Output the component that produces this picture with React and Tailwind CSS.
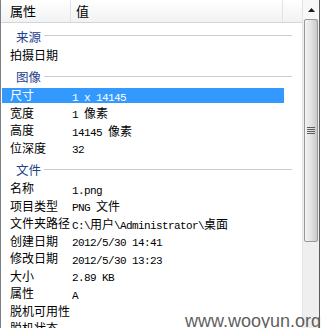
import React from "react";

const CJK = /[\u3000-\u9fff\uff00-\uffef]/;

function Val({ text }) {
  const parts = [];
  let cur = "";
  let curCjk = null;
  for (const ch of text) {
    const c = CJK.test(ch);
    if (curCjk === null || c === curCjk) {
      cur += ch;
    } else {
      parts.push([cur, curCjk]);
      cur = ch;
    }
    curCjk = c;
  }
  if (cur) parts.push([cur, curCjk]);
  return (
    <span className="whitespace-pre">
      {parts.map(([t, c], i) =>
        c ? (
          <span key={i} className="font-['Noto_Sans_CJK_SC',sans-serif] text-[12px]">
            {t}
          </span>
        ) : (
          <span key={i} className="font-['Liberation_Mono',monospace] text-[11px] tracking-[-0.6px]">
            {t}
          </span>
        )
      )}
    </span>
  );
}

function Row({ label, value, selected }) {
  return (
    <div className="h-[17.5px] flex items-center shrink-0">
      <div
        className={
          "flex items-center h-[15px] w-[282px] ml-[1px] " +
          (selected ? "bg-[#3399ff] text-white" : "text-black")
        }
      >
        <div className="w-[70px] pl-[8px] text-[12px] leading-none font-['Noto_Sans_CJK_SC',sans-serif] whitespace-nowrap">
          {label}
        </div>
        <div className="leading-none">{value ? <Val text={value} /> : null}</div>
      </div>
    </div>
  );
}

function Section({ title }) {
  return (
    <div className="h-[23px] flex items-start shrink-0 pt-[5px]">
      <div className="flex items-center h-[17.5px] w-[291px]">
        <span className="pl-[15px] pr-[3px] text-[12.5px] leading-none text-[#1e3f8e] font-['Noto_Sans_CJK_SC',sans-serif]">
          {title}
        </span>
        <div className="flex-1 h-px bg-[#c6cfd6] -mt-[2px]" />
      </div>
    </div>
  );
}

export default function App() {
  return (
    <div className="w-[322px] h-[328px] bg-white flex overflow-hidden relative">
      <div className="w-[302px] h-full border-l border-[#7a7f88] flex flex-col">
        <div className="h-[23px] shrink-0 flex border-b border-[#d5d5d5] bg-gradient-to-b from-[#ffffff] to-[#f1f2f4] text-[13px] font-['Noto_Sans_CJK_SC',sans-serif] text-black">
          <div className="w-[70px] pl-[9px] flex items-center border-r border-[#e2e3e5]">属性</div>
          <div className="w-[212px] pl-[5px] flex items-center border-r border-[#e2e3e5]">值</div>
          <div className="flex-1" />
        </div>
        <Section title="来源" />
        <Row label="拍摄日期" value="" />
        <Section title="图像" />
        <Row label="尺寸" value="1 x 14145" selected />
        <Row label="宽度" value="1 像素" />
        <Row label="高度" value="14145 像素" />
        <Row label="位深度" value="32" />
        <Section title="文件" />
        <Row label="名称" value="1.png" />
        <Row label="项目类型" value="PNG 文件" />
        <Row label="文件夹路径" value="C:\用户\Administrator\桌面" />
        <Row label="创建日期" value="2012/5/30 14:41" />
        <Row label="修改日期" value="2012/5/30 13:23" />
        <Row label="大小" value="2.89 KB" />
        <Row label="属性" value="A" />
        <Row label="脱机可用性" value="" />
        <Row label="脱机状态" value="" />
      </div>
      <div className="w-[17px] h-full flex flex-col bg-[#efefef] border-l border-[#e4e4e4]">
        <div className="h-[19px] shrink-0 bg-[#f8f8f8] flex items-center justify-center">
          <svg width="7" height="4" viewBox="0 0 7 4">
            <path d="M0 4 L3.5 0 L7 4 Z" fill="#1a1a1a" />
          </svg>
        </div>
        <div className="h-[223px] shrink-0 mx-[1px] rounded-[2px] border border-[#989898] bg-gradient-to-r from-[#f4f4f4] via-[#e2e2e2] to-[#c9c9c9] flex flex-col items-center justify-center gap-[1px]">
          <div className="w-[8px] h-px bg-[#5c5c5c]" />
          <div className="w-[8px] h-px bg-[#5c5c5c]" />
          <div className="w-[8px] h-px bg-[#5c5c5c]" />
          <div className="w-[8px] h-px bg-[#5c5c5c]" />
        </div>
        <div className="flex-1" />
      </div>
      <div className="w-[3px] h-full border-l border-[#5a5a5a] bg-white" />
      <div className="absolute right-[1px] bottom-[-2px] text-[18px] leading-none font-['Liberation_Sans',sans-serif] text-[#5f5f5f]">
        www.wooyun.org
      </div>
    </div>
  );
}
